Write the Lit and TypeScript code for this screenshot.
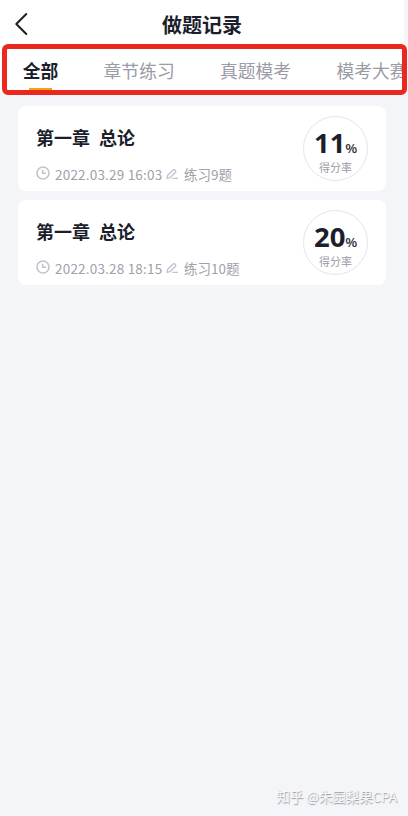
import { LitElement, html, css } from "lit";
import { customElement, property } from "lit/decorators.js";

@customElement("record-card")
class RecordCard extends LitElement {
  @property() time = "";
  @property() count = "";
  @property() score = "";

  static styles = css`
    :host {
      display: flex;
      justify-content: space-between;
      align-items: center;
      box-sizing: border-box;
      height: 85px;
      padding: 0 18px;
      border-radius: 8px;
      background: #fff;
    }
    .title {
      font-size: 18px;
      line-height: 26px;
      font-weight: 700;
      color: #1c1e2c;
      white-space: pre;
      word-spacing: 0.4px;
      margin-top: 11px;
    }
    .meta {
      display: flex;
      align-items: center;
      height: 20px;
      margin-top: 14px;
      font-size: 13.5px;
      line-height: 20px;
      color: #a0a1aa;
      white-space: nowrap;
    }
    .clock { width: 14px; height: 14px; margin-right: 5px; }
    .time { width: 111px; letter-spacing: 0.2px; }
    .pen { width: 13px; height: 13px; margin-right: 5px; }
    svg { fill: none; stroke: #c3c4cb; display: block; flex: none; }
    .score {
      display: flex;
      flex-direction: column;
      align-items: center;
      box-sizing: border-box;
      width: 65px;
      height: 65px;
      border: 1px solid #e4e5ea;
      border-radius: 50%;
      color: #1c1e2c;
    }
    .value { display: flex; align-items: baseline; height: 34px; margin-top: 9px; line-height: 34px; }
    .num { font: 700 27.5px/34px "Noto Sans", sans-serif; }
    .pct { font-size: 12.3px; line-height: 16px; font-weight: 500; -webkit-text-stroke: 0.2px #1c1e2c; }
    .label { font-size: 11px; line-height: 14px; color: #9a9ba6; }
  `;

  render() {
    return html`
      <div>
        <div class="title">第一章  总论</div>
        <div class="meta">
          <svg class="clock" viewBox="0 1 14 14" stroke-width="1.6" overflow="visible">
            <circle cx="7" cy="7" r="6"></circle>
            <path d="M6.7 3.8V7.3H10"></path>
          </svg>
          <span class="time">${this.time}</span>
          <svg class="pen" viewBox="0 0 13 13" stroke-width="1.4" stroke-linejoin="round">
            <path d="M1 10.3L1.8 7.2L6.8 2.2Q8 1 9.2 2.2Q10.4 3.4 9.2 4.6L4.2 9.6L1 10.3ZM6.3 10.4H12"></path>
          </svg>
          <span>${this.count}</span>
        </div>
      </div>
      <div class="score">
        <div class="value"><span class="num">${this.score}</span><span class="pct">%</span></div>
        <div class="label">得分率</div>
      </div>
    `;
  }
}

@customElement("app-root")
class AppRoot extends LitElement {
  static styles = css`
    :host {
      display: block;
      position: relative;
      height: 816px;
      overflow: hidden;
      background: #f4f5f9;
      font-family: "Noto Sans CJK SC", sans-serif;
    }
    .header {
      display: grid;
      grid-template-columns: 40px 1fr 40px;
      align-items: center;
      height: 50px;
      margin-right: 4px;
      background: #fff;
    }
    .back { width: 14px; height: 24px; margin: -2px 0 0 14px; fill: none; stroke: #1e1f26; }
    .heading { font-size: 20px; line-height: 28px; font-weight: 700; color: #1c1e2c; text-align: center; }
    .tabs {
      display: flex;
      gap: 45.3px;
      height: 43px;
      margin-right: 4px;
      padding-left: 22.7px;
      overflow: hidden;
      background: #fff;
      font-size: 17.8px;
      line-height: 41px;
      color: #9a9ba6;
      white-space: nowrap;
    }
    .tab { flex: none; }
    .active {
      display: flex;
      flex-direction: column;
      align-items: center;
      font-weight: 700;
      color: #1c1e2c;
    }
    .active::after { content: ""; width: 23px; height: 4px; margin-top: -3px; background: #f5a512; }
    .list { display: flex; flex-direction: column; gap: 9.4px; padding: 13px 22px 0 18px; }
    .frame {
      position: absolute;
      left: 2px;
      top: 44px;
      width: 405px;
      height: 51px;
      box-sizing: border-box;
      border: 5px solid #e9281f;
      border-radius: 6px;
    }
    .mark {
      position: absolute;
      right: 11px;
      bottom: 10px;
      font-size: 13.4px;
      line-height: 20px;
      color: #f6f7fa;
      text-shadow: 0.7px 0.7px 1px #979aa3;
      white-space: nowrap;
    }
  `;

  render() {
    return html`
      <div class="header">
        <svg class="back" viewBox="0 0 14 24" stroke-width="2" stroke-linecap="round" stroke-linejoin="round">
          <path d="M12.3 2L2.3 12L12.3 22"></path>
        </svg>
        <div class="heading">做题记录</div>
      </div>
      <div class="tabs">
        <div class="tab active">全部</div>
        <div class="tab">章节练习</div>
        <div class="tab">真题模考</div>
        <div class="tab">模考大赛</div>
      </div>
      <div class="list">
        <record-card time="2022.03.29 16:03" count="练习9题" score="11"></record-card>
        <record-card time="2022.03.28 18:15" count="练习10题" score="20"></record-card>
      </div>
      <div class="frame"></div>
      <div class="mark">知乎 @朱园梨果CPA</div>
    `;
  }
}
